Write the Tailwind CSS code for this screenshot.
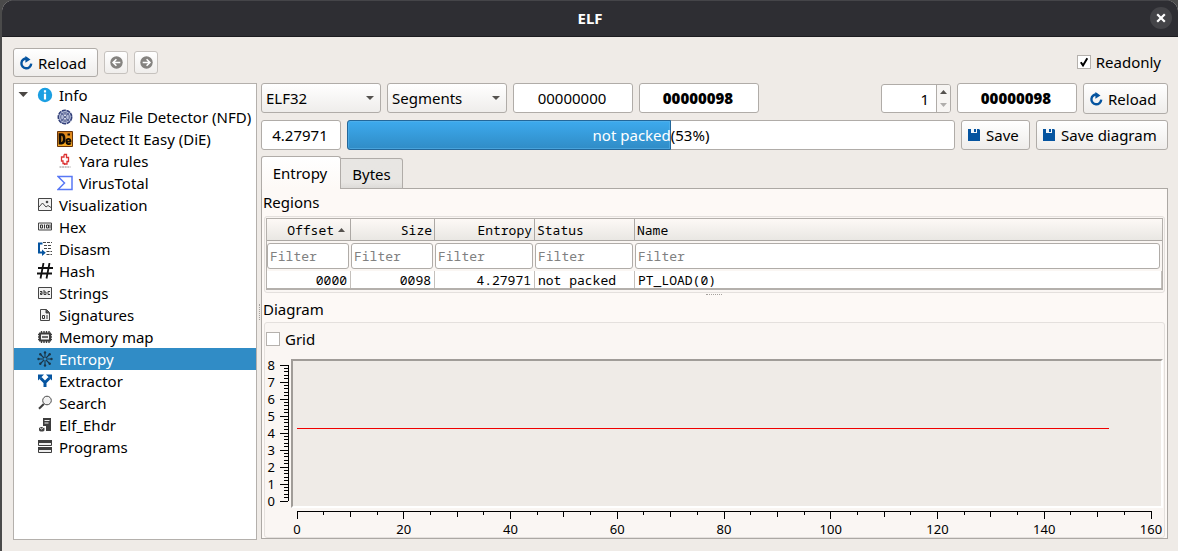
<!DOCTYPE html>
<html lang="en">
<head>
<meta charset="utf-8">
<title>ELF</title>
<script src="https://cdn.jsdelivr.net/npm/@tailwindcss/browser@4"></script>
</head>
<body class="h-screen overflow-hidden bg-[#4a4a4a] pl-0.5 font-['Noto_Sans',sans-serif] text-[15px] leading-[22px] text-black">
<div class="flex h-full flex-col overflow-hidden rounded-t-xl bg-[#efebe7]">
  <header class="grid h-[37px] shrink-0 grid-cols-[1fr_auto_1fr] items-center border-t border-b border-t-[#454549] border-b-[#1c1c20] bg-[#2e2e33] pr-1.5 pb-0.5 pl-1.5">
    <h1 class="col-start-2 text-[15px] font-bold text-white">ELF</h1>
    <button aria-label="Close" class="grid size-[22px] place-items-center justify-self-end rounded-full bg-[#444448]">
      <svg class="size-[10px]" viewBox="0 0 10 10" stroke="#fff" stroke-width="2.2"><path d="M1.2 1.2 8.8 8.8M8.8 1.2 1.2 8.8"/></svg>
    </button>
  </header>

  <div class="flex min-h-0 flex-1 flex-col px-[11px] pt-[11px] pb-[11px] pr-[10px]">
    <div class="flex h-[29px] shrink-0 items-center gap-1.5">
      <button class="flex h-[29px] w-[85px] items-center gap-[5px] rounded-[3px] border border-[#b0aca8] bg-linear-to-b from-white to-[#efedeb] pl-[5px]">
        <svg class="size-[14px]" viewBox="0 0 14 14"><path d="M8 2.500A4.900 4.900 0 1 0 12.200 7.600" fill="none" stroke="#0554a0" stroke-width="2.400"/><path d="M6.400 0 11.500 3.400 6.400 6.800Z" fill="#0554a0"/></svg>Reload</button>
      <button aria-label="Back" class="grid h-[23px] w-6 place-items-center rounded-[3px] border border-[#c6c2be] bg-linear-to-b from-white to-[#f0eeec]">
        <svg class="size-[13px]" viewBox="0 0 13 13"><circle cx="6.5" cy="6.5" r="6.2" fill="#858380"/><path d="M10.3 6.5H3.4M6.4 3.2 3.1 6.5 6.4 9.8" fill="none" stroke="#fff" stroke-width="1.6"/></svg></button>
      <button aria-label="Forward" class="grid h-[23px] w-6 place-items-center rounded-[3px] border border-[#c6c2be] bg-linear-to-b from-white to-[#f0eeec]">
        <svg class="size-[13px]" viewBox="0 0 13 13"><circle cx="6.5" cy="6.5" r="6.2" fill="#858380"/><path d="M2.7 6.5H9.6M6.6 3.2 9.9 6.5 6.6 9.8" fill="none" stroke="#fff" stroke-width="1.6"/></svg></button>
      <label class="ml-auto flex items-center gap-[5px] pr-[7px] pb-px">
        <span class="relative grid size-[14px]">
          <input type="checkbox" checked class="size-[14px] appearance-none border border-[#b5b1ad] bg-white">
          <svg class="pointer-events-none absolute inset-0 size-[14px]" viewBox="0 0 14 14"><path d="M3.8 7.2 6 10.4 10.3 3.2" fill="none" stroke="#000" stroke-width="2"/></svg>
        </span>Readonly</label>
    </div>

    <div class="mt-1.5 flex min-h-0 flex-1">
      <nav class="w-[244px] shrink-0 border border-[#b4b0ac] bg-white">
        <ul class="[&_a]:flex [&_a]:h-[22px] [&_a]:items-center [&_a]:gap-1.5 [&_a]:pl-[23px] [&_a]:whitespace-nowrap [&_svg]:size-4 [&_svg]:shrink-0">
          <li>
            <a href="#" class="relative"><svg class="absolute left-0.5" viewBox="0 0 16 16"><path d="M2.500 5H12L7.300 10Z" fill="#4a4744"/></svg><svg viewBox="0 0 16 16"><circle cx="8" cy="8" r="7.200" fill="#1b9fe2"/><path d="M8 6.700V12.500M8 3.300V5.500" stroke="#fff" stroke-width="2.200"/></svg>Info</a>
            <ul class="[&_a]:gap-1 [&_a]:pl-[43px]">
              <li><a href="#"><svg viewBox="0 0 16 16"><circle cx="8" cy="8" r="6.700" fill="#b2bbd8" stroke="#334079" stroke-width="1.600" stroke-dasharray="4 .7"/><circle cx="8" cy="8" r="4.300" fill="none" stroke="#5d6792"/><circle cx="8" cy="6.300" r="1.500" fill="#dfe3f1" stroke="#3f4a7d" stroke-width=".8"/><circle cx="8" cy="9.800" r="1.500" fill="#dfe3f1" stroke="#3f4a7d" stroke-width=".8"/><path d="M3 3 6 6M13 3 10 6M3 13 6 10M13 13 10 10" stroke="#4d5990" stroke-width=".8"/></svg>Nauz File Detector (NFD)</a></li>
              <li><a href="#"><svg viewBox="0 0 16 16"><defs><linearGradient id="die" x2="0" y2="1"><stop stop-color="#d9801a"/><stop offset="1" stop-color="#f8ad25"/></linearGradient></defs><path d="M.5.5h15v15H.5Z" fill="url(#die)" stroke="#6a360b"/><path d="M3 3.500H4.700C8 3.500 8 12.200 4.700 12.200H3Z" fill="none" stroke="#120b05" stroke-width="2.600"/><path d="M9.300 10.600H13.500C13.800 7 9.300 7 9.300 10.300 9.300 13.600 12.700 13.600 13.600 12.200" fill="none" stroke="#120b05" stroke-width="1.900"/><path d="M10.500 2.500h2.500v2h-2.500Z" fill="#120b05"/></svg>Detect It Easy (DiE)</a></li>
              <li><a href="#"><svg viewBox="0 0 16 16"><path d="M7 1.500H9.500V4.500H11.500V8.500H10V11H8M7 1.500V4H4.500V8H6V10.500H7.500V12" fill="none" stroke="#dc3434" stroke-width="1.300"/><path d="M2.500 14h11" stroke="#8d8786" stroke-dasharray="2 .6"/></svg>Yara rules</a></li>
              <li><a href="#"><svg viewBox="0 0 16 16"><path d="M1 1.500H15V14.500H1L7.500 8Z" fill="#fff" stroke="#5878f5" stroke-width="1.500"/></svg>VirusTotal</a></li>
            </ul>
          </li>
          <li><a href="#"><svg viewBox="0 0 16 16"><path d="M1.500 1.500h13v12h-13Z" fill="#f2f2f2" stroke="#454545"/><path d="M2 10 5.500 6 9 10 11 8.500 14 10.500" fill="none" stroke="#454545"/><circle cx="10" cy="5" r="1.300" fill="#454545"/></svg>Visualization</a></li>
          <li><a href="#"><svg viewBox="0 0 16 16"><path d="M1.500 4h13v7h-13Z" fill="#eee" stroke="#454545"/><path d="M3.500 6h2v3h-2ZM9.500 6h2v3h-2ZM7.500 5.500v4M13 5.500v4" fill="none" stroke="#353535"/></svg>Hex</a></li>
          <li><a href="#"><svg viewBox="0 0 16 16"><path d="M5.500 2.500H2V11.500H7" fill="none" stroke="#0554a0" stroke-width="2"/><path d="M5 8.500 8.800 11.700 5 15Z" fill="#0554a0"/><path d="M6 1.500h9M7 4.500h8M7 7.500h8M9.500 10.500H15M9.500 13.500H15" stroke="#454545" stroke-dasharray="3 1"/></svg>Disasm</a></li>
          <li><a href="#"><svg viewBox="0 0 16 16"><path d="M6.500 0 3.500 15.500M12.500 0 9.500 15.500M1 5H16M0 10.500H15" stroke="#111" stroke-width="1.800"/></svg>Hash</a></li>
          <li><a href="#"><svg viewBox="0 0 16 16"><path d="M1.500 2.500h13v11h-13Z" fill="#f2f2f2" stroke="#454545"/><path d="M3 6.500H5V9.500H3.500V8H5M7 5V9.500H9V7H7M13 6.500H11V9.500H13" fill="none" stroke="#353535"/></svg>Strings</a></li>
          <li><a href="#"><svg viewBox="0 0 16 16"><path d="M3.500 2.500H9.500L12.500 5.500V13.500H3.500Z" fill="#f2f2f2" stroke="#454545"/><path d="M9 2.500V6H12.500" fill="#454545" stroke="#454545"/><path d="M5.500 8.500h2v3h-2ZM10 8v4" fill="none" stroke="#353535"/></svg>Signatures</a></li>
          <li><a href="#"><svg viewBox="0 0 16 16"><path d="M3 4.500h10v7H3Z" fill="#f4f4f4" stroke="#3d3d3d" stroke-width="2"/><path d="M4.500 2v2M7 2v2M9.500 2v2M12 2v2M4.500 12v2M7 12v2M9.500 12v2M12 12v2M1 5.500h2M1 8h2M1 10.500h2M13 5.500h2M13 8h2M13 10.500h2" stroke="#3d3d3d" stroke-width="1.400"/><path d="M5 8h6" stroke="#3d3d3d" stroke-width="1.500"/></svg>Memory map</a></li>
          <li><a href="#" aria-current="page" class="bg-[#308cc6] text-white"><svg viewBox="0 0 16 16"><path d="M8 1V15M1 8H15M3 3 13 13M13 3 3 13" stroke="#1b3547" stroke-width="1.100"/><g fill="#1b3547"><circle cx="8" cy="1.500" r="1.200"/><circle cx="8" cy="14.500" r="1.200"/><circle cx="1.500" cy="8" r="1.200"/><circle cx="14.500" cy="8" r="1.200"/><circle cx="3.300" cy="3.300" r="1.200"/><circle cx="12.700" cy="3.300" r="1.200"/><circle cx="3.300" cy="12.700" r="1.200"/><circle cx="12.700" cy="12.700" r="1.200"/></g><circle cx="8" cy="8" r="1.500" fill="#308cc6"/></svg>Entropy</a></li>
          <li><a href="#"><svg viewBox="0 0 16 16"><path d="M8 14V9.500L3.500 5M8 9.500 12.500 5" fill="none" stroke="#0554a0" stroke-width="3"/><path d="M1 1.500H7L1 7.500ZM15 1.500H9L15 7.500Z" fill="#0554a0"/></svg>Extractor</a></li>
          <li><a href="#"><svg viewBox="0 0 16 16"><circle cx="10" cy="5.500" r="4.300" fill="#f1f1f1" stroke="#4b4b4b"/><path d="M6.800 9 2 13.800" stroke="#3d3d3d" stroke-width="2"/></svg>Search</a></li>
          <li><a href="#"><svg viewBox="0 0 16 16"><path d="M6 1H14V14H9V9H6Z" fill="#3d3d3d"/><path d="M7.500 3.500h5M7.500 6h4" stroke="#eee"/><path d="M2 11C2 9.500 7.500 9.500 7.500 11V13C7.500 15 2 15 2 13Z" fill="#444"/><path d="M2.500 10.500 4.500 12 7 10" fill="none" stroke="#eee"/></svg>Elf_Ehdr</a></li>
          <li><a href="#"><svg viewBox="0 0 16 16"><path d="M1 1h14v3H1ZM1 8h14v3H1Z" fill="#3d3d3d"/><path d="M1.500 4v2.500h13V4M1.500 11v2.500h13V11" fill="#eee" stroke="#3d3d3d"/></svg>Programs</a></li>
        </ul>
      </nav>

      <div class="flex w-1 shrink-0 items-center justify-center"><span class="h-4 border-l border-dotted border-[#a5a19d]"></span></div>

      <main class="flex min-w-0 flex-1 flex-col pb-px">
        <div class="flex h-[30px] shrink-0 items-center gap-1.5">
          <span class="relative w-[120px]"><select aria-label="Type" class="h-[30px] w-full appearance-none rounded-[3px] border border-[#b0aca8] bg-linear-to-b from-white to-[#efedeb] pl-1"><option>ELF32</option></select><svg class="pointer-events-none absolute top-[13px] right-[7px] h-1 w-2" viewBox="0 0 8 4"><path d="M0 0H8L4 4Z" fill="#55524f"/></svg></span>
          <span class="relative w-[120px]"><select aria-label="Map mode" class="h-[30px] w-full appearance-none rounded-[3px] border border-[#b0aca8] bg-linear-to-b from-white to-[#efedeb] pl-1"><option>Segments</option></select><svg class="pointer-events-none absolute top-[13px] right-[7px] h-1 w-2" viewBox="0 0 8 4"><path d="M0 0H8L4 4Z" fill="#55524f"/></svg></span>
          <input aria-label="Offset" value="00000000" class="h-[30px] w-[120px] rounded-[3px] border border-[#b0aca8] bg-white pr-0.5 text-center">
          <input aria-label="Size" value="00000098" class="h-[30px] w-[120px] rounded-[3px] border border-[#b0aca8] bg-white pr-0.5 text-center font-black">
          <div class="mt-px ml-auto flex h-[29px] w-[70px] overflow-hidden rounded-[3px] border border-[#b0aca8] bg-white">
            <input aria-label="Count" value="1" class="w-[55px] min-w-0 border-r border-[#b0aca8] pr-[7px] text-right">
            <div class="flex flex-1 flex-col bg-[#f7f5f3]">
              <button aria-label="Increase" class="grid flex-1 place-items-center"><svg class="h-[4px] w-[7px]" viewBox="0 0 7 4"><path d="M0 4H7L3.500 0Z" fill="#55524f"/></svg></button>
              <button aria-label="Decrease" class="grid flex-1 place-items-center"><svg class="h-[4px] w-[7px]" viewBox="0 0 7 4"><path d="M0 0H7L3.500 4Z" fill="#b0aeac"/></svg></button>
            </div>
          </div>
          <input aria-label="Total size" value="00000098" class="h-[30px] w-[120px] rounded-[3px] border border-[#b0aca8] bg-white pr-0.5 text-center font-black">
          <button class="mt-px flex h-[31px] w-[85px] items-center gap-[5px] rounded-[3px] border border-[#b0aca8] bg-linear-to-b from-white to-[#efedeb] pl-[5px]">
            <svg class="size-[14px]" viewBox="0 0 14 14"><path d="M8 2.500A4.900 4.900 0 1 0 12.200 7.600" fill="none" stroke="#0554a0" stroke-width="2.400"/><path d="M6.400 0 11.500 3.400 6.400 6.800Z" fill="#0554a0"/></svg>Reload</button>
        </div>

        <div class="mt-[7px] flex h-[30px] shrink-0 gap-1.5">
          <input aria-label="Entropy value" value="4.27971" class="w-20 rounded-[3px] border border-[#b0aca8] bg-white pr-0.5 text-center">
          <div role="progressbar" aria-valuenow="53" aria-valuemin="0" aria-valuemax="100" class="relative flex flex-1 items-center justify-center rounded-[3px] border border-[#b0aca8] bg-white">
            <div class="absolute -inset-y-px -left-px rounded-l-[3px] border border-[#23679a] bg-linear-to-b from-[#3daaee] to-[#308cc6] inset-ring inset-ring-[#58b2ea]/60" style="width:53.400%"></div>
            <span class="relative text-white">not packed</span><span class="relative">(53%)</span>
          </div>
          <button class="flex w-[69px] items-center gap-1.5 rounded-[3px] border border-[#b0aca8] bg-linear-to-b from-white to-[#efedeb] pl-[6px]">
            <svg class="size-3 shrink-0" viewBox="0 0 12 12"><path d="M0 0H11L12 1V12H0Z" fill="#0554a0"/><path d="M3 0H9V4H3Z" fill="#f2f6fa"/><path d="M6 0H8V3H6Z" fill="#0554a0"/></svg>Save</button>
          <button class="flex w-[132px] items-center gap-1.5 rounded-[3px] border border-[#b0aca8] bg-linear-to-b from-white to-[#efedeb] pl-[6px]">
            <svg class="size-3 shrink-0" viewBox="0 0 12 12"><path d="M0 0H11L12 1V12H0Z" fill="#0554a0"/><path d="M3 0H9V4H3Z" fill="#f2f6fa"/><path d="M6 0H8V3H6Z" fill="#0554a0"/></svg>Save diagram</button>
        </div>

        <div role="tablist" class="z-10 mt-1.5 -mb-px flex h-[33px] shrink-0 items-end">
          <button role="tab" aria-selected="true" class="h-[33px] w-20 rounded-t-[3px] border border-b-0 border-[#b0aca8] bg-linear-to-b from-white to-[#fdf9f6] pr-0.5 pb-px">Entropy</button>
          <button role="tab" aria-selected="false" class="h-[31px] w-[62px] rounded-tr-[3px] border border-l-0 border-[#b0aca8] bg-linear-to-b from-[#e8e6e3] from-80% to-[#dddbd8]">Bytes</button>
        </div>

        <div class="flex min-h-0 flex-1 flex-col border border-[#aca8a4] bg-[#fdf9f6] pt-0.5 pr-0.5 pl-px">
          <h2>Regions</h2>
          <div class="mt-[3px] ml-px rounded-[3px] border border-[#e4e0dd] bg-[#faf6f3] p-px pb-0.5">
            <table class="w-full table-fixed border-separate border-spacing-0 border border-b-2 border-[#b4b0ac] font-['Noto_Sans_Mono','DejaVu_Sans_Mono',monospace] text-[13px] leading-4">
              <colgroup><col class="w-[84px]"><col class="w-[84px]"><col class="w-[100px]"><col class="w-[100px]"><col></colgroup>
              <thead>
                <tr class="[&>th]:h-[22px] [&>th]:border-b [&>th]:border-[#aca8a4] [&>th]:bg-linear-to-b [&>th]:from-[#fdf9f6] [&>th]:to-[#e9e7e3] [&>th]:px-0.5 [&>th]:py-0 [&>th]:font-normal">
                  <th class="border-r text-right"><span class="inline-flex items-center gap-1 pr-[3px]">Offset<svg class="h-[4px] w-[7px]" viewBox="0 0 7 4"><path d="M0 4H7L3.500 0Z" fill="#55524f"/></svg></span></th>
                  <th class="border-r pr-0 text-right">Size</th>
                  <th class="border-r pr-0 text-right">Entropy</th>
                  <th class="border-r text-left">Status</th>
                  <th class="text-left">Name</th>
                </tr>
                <tr class="[&_input]:block [&_input]:h-[26px] [&_input]:w-full [&_input]:rounded-[3px] [&_input]:border [&_input]:border-[#b0aca8] [&_input]:bg-white [&_input]:px-0.5 [&_input]:placeholder:text-[#808080] [&>td]:py-0.5 [&>td]:pr-0.5">
                  <td><input aria-label="Filter offset" placeholder="Filter"></td>
                  <td><input aria-label="Filter size" placeholder="Filter"></td>
                  <td><input aria-label="Filter entropy" placeholder="Filter"></td>
                  <td><input aria-label="Filter status" placeholder="Filter"></td>
                  <td><input aria-label="Filter name" placeholder="Filter"></td>
                </tr>
              </thead>
              <tbody>
                <tr class="[&>td]:h-[17px] [&>td]:border-r [&>td]:border-[#c4c0bc] [&>td]:bg-white [&>td]:px-[3px] [&>td]:py-0">
                  <td class="text-right">0000</td><td class="text-right">0098</td><td class="text-right">4.27971</td><td>not packed</td><td>PT_LOAD(0)</td>
                </tr>
              </tbody>
            </table>
          </div>
          <div class="flex h-[5px] shrink-0 items-start justify-center pt-px"><span class="w-4 border-t border-dotted border-[#a5a19d]"></span></div>
          <h2>Diagram</h2>
          <div class="mt-0.5 ml-px flex min-h-0 flex-1 flex-col rounded-[3px] border border-[#e4e0dd] bg-[#faf6f3] px-px pt-[5px]">
            <label class="flex items-center gap-[5px]"><input type="checkbox" class="size-[14px] appearance-none border border-[#b5b1ad] bg-white">Grid</label>
            <div class="mt-[9px] flex min-h-0 flex-1">
              <div class="w-[25px] shrink-0 pt-[6px] pb-[7px]"><svg id="y-axis" class="h-full w-full overflow-visible text-[13px]" shape-rendering="crispEdges" stroke="#000"></svg></div>
              <div class="min-w-0 flex-1 border-2 border-t-[#a09c98] border-r-white border-b-white border-l-[#a09c98] bg-[#efebe7] pt-1 pr-[10px] pb-[5px] pl-1">
                <svg class="h-full w-full overflow-visible" shape-rendering="crispEdges"><line x1="0" x2="95.100%" y1="47%" y2="47%" stroke="#f00000"/></svg>
              </div>
            </div>
            <div class="mr-3 ml-[31px] h-[29px] shrink-0 pt-[2px]"><svg id="x-axis" class="h-full w-full overflow-visible text-[13px]" shape-rendering="crispEdges" stroke="#000"></svg></div>
          </div>
        </div>
      </main>
    </div>
  </div>
</div>
<script>
  const NS = 'http://www.w3.org/2000/svg';
  function add(parent, tag, attrs, text) {
    const el = document.createElementNS(NS, tag);
    for (const k in attrs) el.setAttribute(k, attrs[k]);
    if (text !== undefined) el.textContent = text;
    parent.appendChild(el);
  }
  const ya = document.getElementById('y-axis');
  add(ya, 'line', {x1: 22, x2: 22, y1: '0%', y2: '100%'});
  for (let i = 0; i <= 40; i++) {
    const y = i * 2.5 + '%';
    add(ya, 'line', {x1: i % 5 ? 18 : 14, x2: 22, y1: y, y2: y});
    if (i % 5 === 0) add(ya, 'text', {x: 9, y, dy: 5, 'text-anchor': 'end', stroke: 'none'}, 8 - i / 5);
  }
  const xa = document.getElementById('x-axis');
  add(xa, 'line', {x1: '0%', x2: '100%', y1: 1, y2: 1});
  for (let v = 0; v <= 160; v += 5) {
    const x = v / 1.6 + '%';
    add(xa, 'line', {x1: x, x2: x, y1: 1, y2: v % 20 === 0 ? 9 : v % 10 === 0 ? 7 : 5});
    if (v % 20 === 0) add(xa, 'text', {x, y: 24, 'text-anchor': 'middle', stroke: 'none'}, v);
  }
</script>
</body>
</html>
